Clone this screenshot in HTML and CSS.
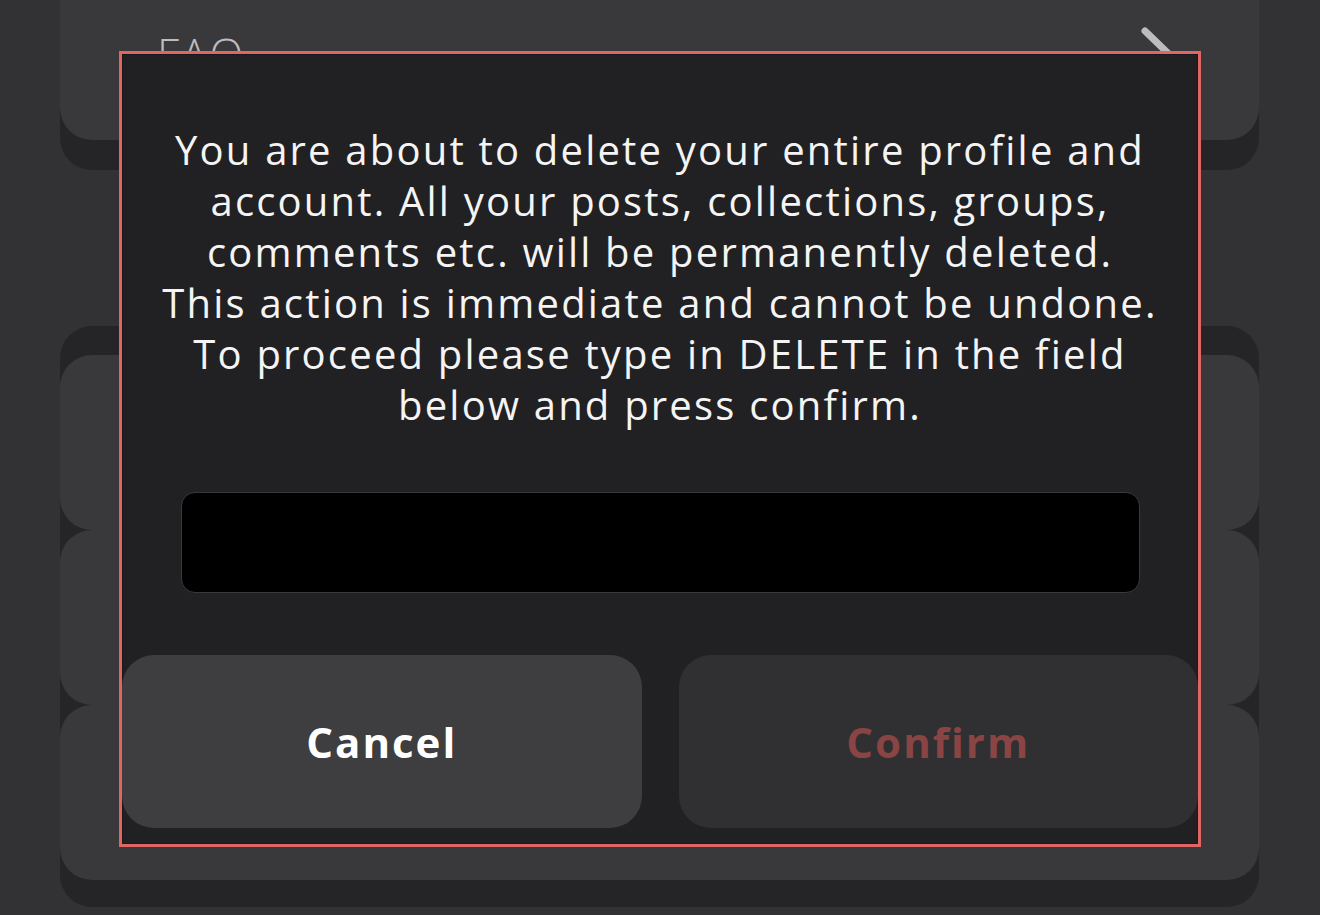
FILE: index.html
```html
<!DOCTYPE html>
<html lang="en">
<head>
  <meta charset="UTF-8" />
  <meta name="viewport" content="width=device-width, initial-scale=1" />
  <title>Delete Account</title>
  <link rel="stylesheet" href="styles.css">
</head>
<body>
  <div class="settings">
    <div class="stack stack-top">
      <div class="row">
        <span class="row-label">FAQ</span>
        <svg class="chevron" width="44" height="70" viewBox="0 0 44 70">
          <path d="M6 6 L36 35 L6 64" fill="none" stroke="#bdbcbd" stroke-width="7" stroke-linecap="round" stroke-linejoin="round" />
        </svg>
      </div>
    </div>

    <div class="stack stack-group">
      <div class="row"></div>
      <div class="row"></div>
      <div class="row"></div>
    </div>
  </div>

  <div class="modal">
    <p class="modal-text">
      You are about to delete your entire profile and<br>
      account. All your posts, collections, groups,<br>
      comments etc. will be permanently deleted.<br>
      This action is immediate and cannot be undone.<br>
      To proceed please type in DELETE in the field<br>
      below and press confirm.
    </p>

    <input type="text" class="confirm-input" id="confirmInput" autocomplete="off" />

    <div class="modal-actions">
      <button class="btn btn-cancel">Cancel</button>
      <button class="btn btn-confirm" disabled>Confirm</button>
    </div>
  </div>
</body>
</html>
```

FILE: styles.css
```css
body {
  margin: 0;
  background: #323134;
  font-family: 'Open Sans', sans-serif;
  overflow: hidden;
  height: 915px;
}

.settings {
  padding: 0 61px 0 60px;
  margin-top: -60px;
}

.stack {
  background: #252427;
  border-radius: 32px;
  padding: 0 0 30px;
}

.stack-group {
  margin-top: 156px;
  padding: 29px 0 27px;
}

.row {
  background: #39383b;
  border-radius: 32px;
  height: 175px;
}

.stack-top .row {
  height: 200px;
  display: flex;
  align-items: flex-start;
  justify-content: space-between;
  padding: 0 76px 0 97px;
  box-sizing: border-box;
}

.row-label {
  color: #bdbcbd;
  font-size: 44px;
  font-weight: 300;
  margin-top: 84px;
  letter-spacing: 2px;
}

.chevron {
  margin-top: 85px;
}

/* dialog sits over the settings list */
.modal {
  position: absolute;
  left: 119px;
  top: 51px;
  width: 1082px;
  height: 796px;
  box-sizing: border-box;
  border: 3px solid #e06664;
  background: #212022;
  box-shadow: inset 0 0 0 1px #19181a;
  display: flex;
  flex-direction: column;
  align-items: center;
}

.modal-text {
  margin: 70px 0 0;
  color: #f4f4f4;
  font-size: 40px;
  line-height: 51px;
  text-align: center;
  letter-spacing: 2.2px;
  white-space: nowrap;
}

.confirm-input {
  margin-top: 62px;
  width: 959px;
  height: 101px;
  box-sizing: border-box;
  background: #000;
  border: 1px solid #39383a;
  border-radius: 14px;
  outline: none;
  color: #fff;
  font-size: 36px;
  padding: 0 24px;
}

.modal-actions {
  margin-top: auto;
  width: 100%;
  display: flex;
  gap: 37px;
  padding-bottom: 16px;
}

.btn {
  flex: 1;
  height: 173px;
  border: none;
  border-radius: 32px;
  font-family: 'Open Sans', sans-serif;
  font-size: 42px;
  font-weight: 700;
  letter-spacing: 2px;
  cursor: pointer;
}

.btn-cancel {
  background: #3e3d40;
  color: #ffffff;
}

.btn-confirm {
  background: #303032;
  color: #8a4443;
}
```
